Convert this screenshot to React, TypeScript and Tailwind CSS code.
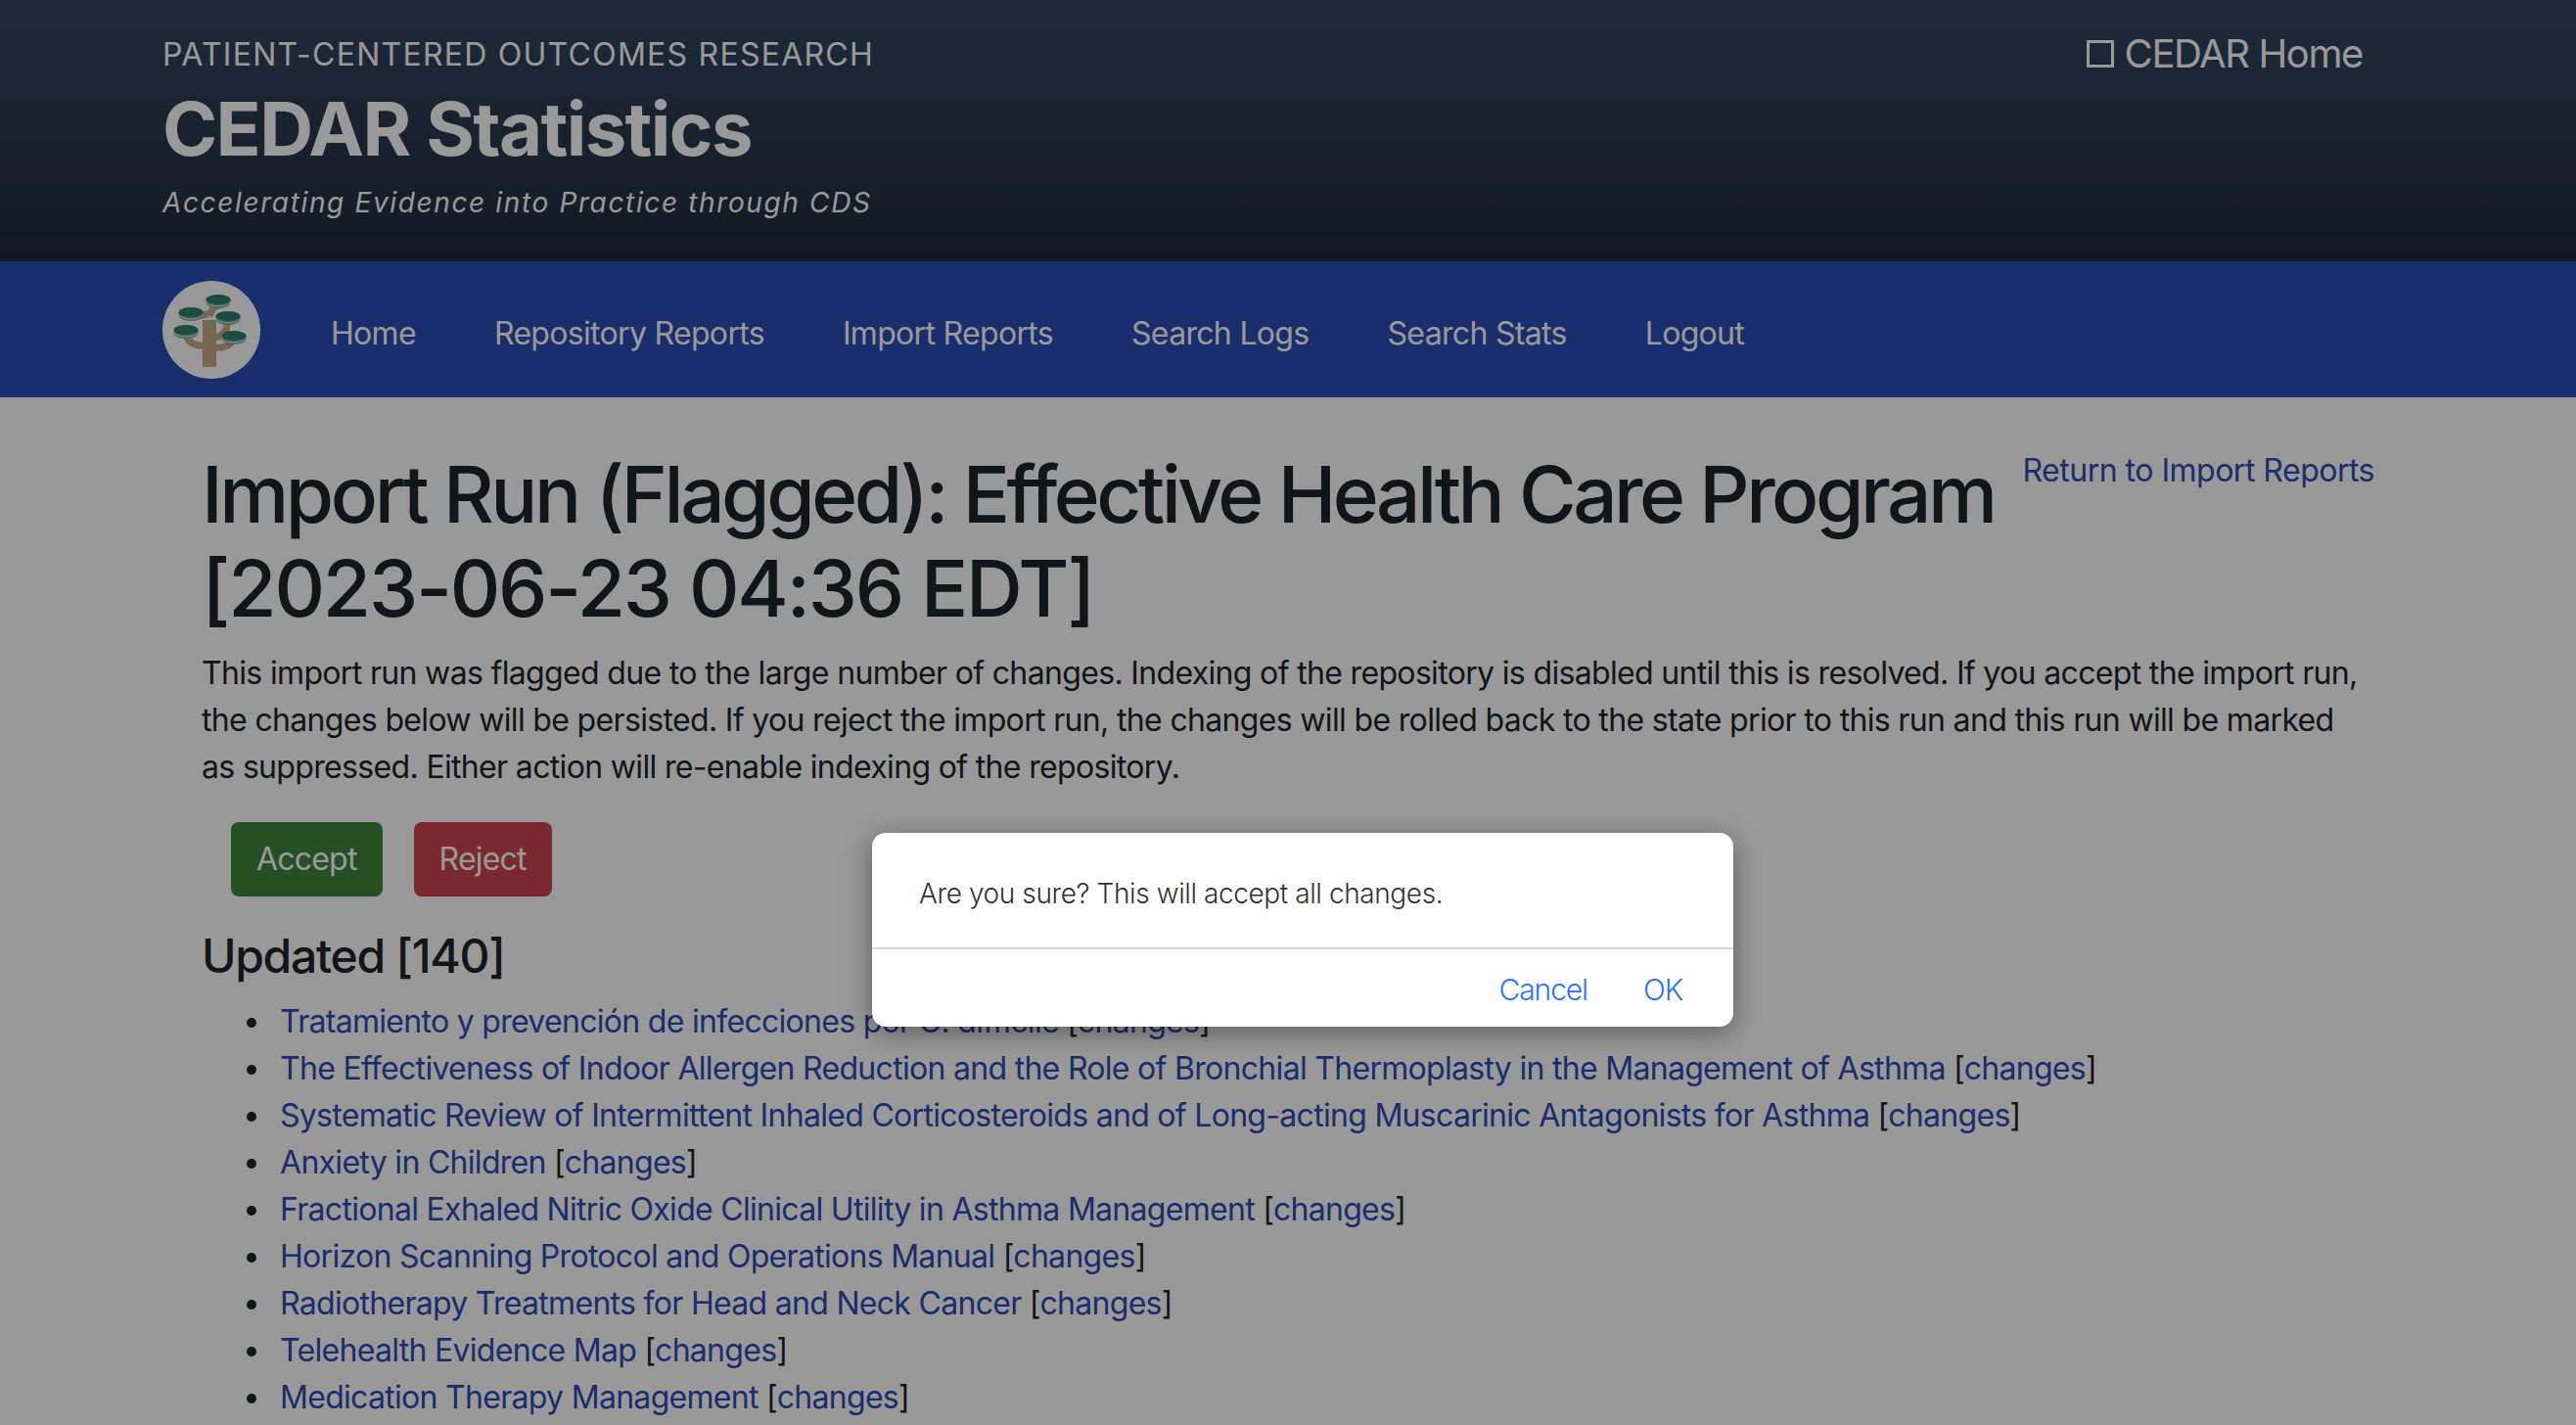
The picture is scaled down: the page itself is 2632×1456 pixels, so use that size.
const navLinks = ['Home', 'Repository Reports', 'Import Reports', 'Search Logs', 'Search Stats', 'Logout'];

const updated = [
  'Tratamiento y prevención de infecciones por C. difficile',
  'The Effectiveness of Indoor Allergen Reduction and the Role of Bronchial Thermoplasty in the Management of Asthma',
  'Systematic Review of Intermittent Inhaled Corticosteroids and of Long-acting Muscarinic Antagonists for Asthma',
  'Anxiety in Children',
  'Fractional Exhaled Nitric Oxide Clinical Utility in Asthma Management',
  'Horizon Scanning Protocol and Operations Manual',
  'Radiotherapy Treatments for Head and Neck Cancer',
  'Telehealth Evidence Map',
  'Medication Therapy Management',
];

function TreeLogo() {
  const disks = [
    [57, 21],
    [29, 34],
    [67, 38],
    [24, 52],
    [73, 58],
  ];
  return (
    <div className="h-[100px] w-[100px] shrink-0 rounded-full bg-white">
      <svg viewBox="0 0 100 100" className="h-full w-full">
        <g fill="none" stroke="#c8aa88" strokeWidth="7">
          <path d="M48 88V40" strokeWidth="14" />
          <path d="M48 36 Q50 26 60 24" />
          <path d="M46 34 Q36 36 32 36" />
          <path d="M50 58 Q66 58 66 42" />
          <path d="M48 66 Q26 68 24 54" />
          <path d="M50 68 Q68 70 72 60" />
        </g>
        {disks.map(([x, y]) => (
          <g key={x}>
            <path d={`M${x - 12.5} ${y - 2}v3a12.5 6 0 0 0 25 0v-3z`} fill="#68a999" />
            <path d={`M${x - 12.5} ${y}a12.5 5 0 0 0 25 0`} fill="none" stroke="#e8f5f1" strokeWidth="1" />
            <ellipse cx={x} cy={y - 2} rx="12.5" ry="5" fill="#347f6c" />
          </g>
        ))}
      </svg>
    </div>
  );
}

export default function App() {
  return (
    <div className="relative h-[1456px] overflow-hidden bg-white font-['Inter',sans-serif] text-[32px] leading-[48px] tracking-[-0.66px] text-[#212529]">
      <header className="flex h-[267px] justify-between bg-gradient-to-b from-[#344963] to-[#212b3c] pl-[166px] pr-[218px] text-white">
        <div>
          <div className="mt-[36px] text-[32px] leading-[40px] tracking-[1.25px]">PATIENT-CENTERED OUTCOMES RESEARCH</div>
          <h1 className="mt-[10px] text-[76px] leading-[90px] font-bold tracking-[-1.6px]">CEDAR Statistics</h1>
          <div className="mt-[13px] text-[28px] leading-[36px] italic tracking-[1.63px]">Accelerating Evidence into Practice through CDS</div>
        </div>
        <a className="mt-[31px] flex h-[48px] items-center gap-[11px] text-[40px] tracking-[-1.4px]">
          <span className="h-[28px] w-[28px] border-[3px] border-white" />
          CEDAR Home
        </a>
      </header>

      <nav className="flex h-[139px] items-center gap-[72px] bg-[#2c4bb5] pl-[166px] text-white">
        <TreeLogo />
        <ul className="flex items-center gap-[80px] pt-[9px] tracking-[-0.68px]">
          {navLinks.map((link) => (
            <li key={link}>{link}</li>
          ))}
        </ul>
      </nav>

      <main className="px-[206px] pt-[51px]">
        <a className="float-right tracking-[-0.5px] text-[#2c4bb5]">Return to Import Reports</a>
        <h1 className="text-[80px] leading-[96px] font-medium tracking-[-3.5px]">
          Import Run (Flagged): Effective Health Care Program <span className="tracking-[-2.2px]">[2023-06-23 04:36 EDT]</span>
        </h1>
        <p className="mt-[15px] pr-[10px]">
          This import run was flagged due to the large number of changes. Indexing of the repository is disabled until this is resolved. If you accept the import run, the changes below will be persisted. If you reject the import run, the changes will be rolled back to the state prior to this run and this run will be marked as suppressed. Either action will re-enable indexing of the repository.
        </p>
        <div className="mt-[32px] flex gap-[32px] pl-[30px]">
          <button className="h-[76px] rounded-[8px] bg-[#3e843e] px-[26px] tracking-[-0.8px] text-white">Accept</button>
          <button className="h-[76px] rounded-[8px] bg-[#cc464d] px-[26px] tracking-[-0.8px] text-white">Reject</button>
        </div>
        <h3 className="mt-[32px] text-[48px] leading-[58px] font-medium tracking-[-1.3px]">Updated [140]</h3>
        <ul className="mt-[14px] pl-[46px] tracking-[-0.7px]">
          {updated.map((title) => (
            <li key={title} className="flex">
              <span className="mt-[20px] mr-[24px] h-[10px] w-[10px] shrink-0 rounded-full bg-[#212529]" />
              <span>
                <a className="text-[#2c4bb5]">{title}</a> [<a className="text-[#2c4bb5]">changes</a>]
              </span>
            </li>
          ))}
        </ul>
      </main>

      <div className="absolute inset-0 bg-black/40" />

      <div className="absolute top-[851px] left-[891px] w-[880px] rounded-[14px] bg-white shadow-[0_6px_28px_rgba(0,0,0,0.4)]">
        <div className="flex h-[119px] items-center border-b-2 border-[#d6d6d6] px-[48px] pt-[6px] text-[28px] font-light tracking-[-0.4px] text-[#333]">
          Are you sure? This will accept all changes.
        </div>
        <div className="flex h-[79px] items-center justify-end gap-[57px] px-[52px] pt-[2px] text-[30px] font-light tracking-[-1.1px] text-[#2a73f5]">
          <button>Cancel</button>
          <button>OK</button>
        </div>
      </div>
    </div>
  );
}
